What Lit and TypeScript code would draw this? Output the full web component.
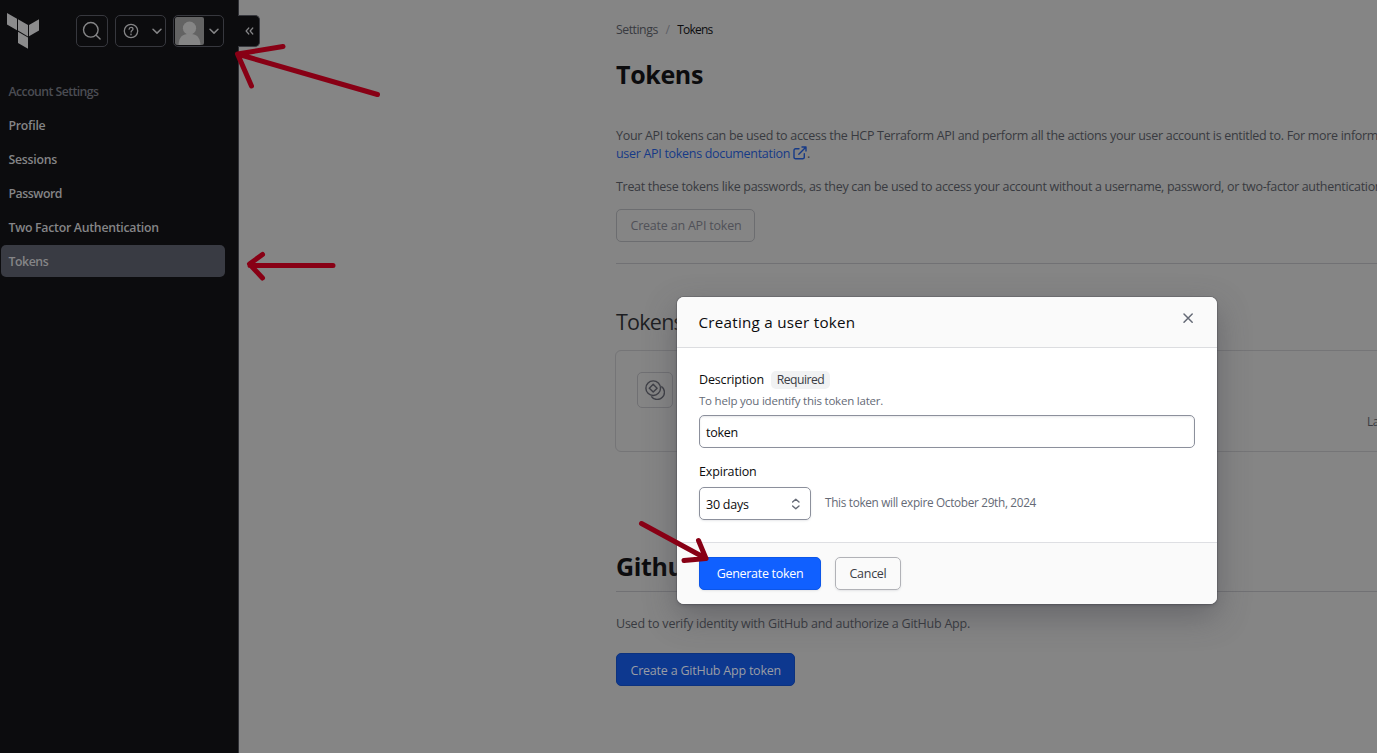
import { LitElement, html, css, svg } from "lit";
import { customElement } from "lit/decorators.js";
import { classMap } from "lit/directives/class-map.js";

const chevron = html`<svg width="12" height="12" viewBox="0 0 12 12" fill="none" stroke="currentColor" stroke-width="1.5" stroke-linecap="round" stroke-linejoin="round"><path d="M2 4.2l4 3.9 4-3.9" /></svg>`;

const sharedStyles = css`
  :host {
    display: block;
    box-sizing: border-box;
    font-family: "Open Sans", "Noto Sans", sans-serif;
    font-size: 12.5px;
    white-space: nowrap;
  }
  *,
  *::before,
  *::after {
    box-sizing: border-box;
  }
  svg {
    display: block;
    flex: none;
  }
  h1,
  h2,
  p {
    margin: 0;
  }
`;

@customElement("app-sidebar")
class AppSidebar extends LitElement {
  static styles = [
    sharedStyles,
    css`
      :host {
        position: relative;
        width: 239px;
        height: 753px;
        flex: none;
        background: #0c0c0e;
        border-right: 1px solid #303136;
        color: #858587;
      }
      .top {
        display: flex;
        height: 75px;
        padding: 15px 0 0 7px;
        gap: 7px;
      }
      .logo {
        margin: -2px 30px 0 0;
      }
      .btn {
        display: flex;
        align-items: center;
        height: 32px;
        width: 51px;
        padding: 0 3px 0 7px;
        gap: 12px;
        border: 1px solid #37383e;
        border-radius: 5px;
      }
      .search {
        width: 32px;
        padding: 0 0 0 5px;
      }
      .user {
        padding: 0 3px 0 1px;
        gap: 4px;
      }
      .nav {
        display: flex;
        flex-direction: column;
        gap: 2px;
        width: 225px;
        padding-left: 1px;
      }
      .item {
        height: 32px;
        line-height: 34px;
        padding-left: 7.5px;
        border-radius: 5px;
        font-size: 12.3px;
        font-weight: 600;
        letter-spacing: -0.27px;
      }
      .heading {
        color: #4b4c53;
        line-height: 33px;
        letter-spacing: -0.57px;
      }
      .tight {
        letter-spacing: -0.45px;
      }
      .active {
        background: #393b43;
        letter-spacing: -0.45px;
      }
      .collapse {
        position: absolute;
        left: 238px;
        top: 15px;
        width: 22px;
        height: 32px;
        display: flex;
        align-items: center;
        padding-left: 7px;
        background: #0c0c0e;
        border: 1px solid #37383e;
        border-left: 0;
        border-radius: 0 5px 5px 0;
      }
    `,
  ];
  items = ["Profile", "Sessions", "Password", "Two Factor Authentication", "Tokens"];
  render() {
    return html`
      <div class="top">
        <svg class="logo" width="32" height="36" viewBox="0 0 32 36" fill="#8b8b8c">
          <path d="M0 0l10 5.8v11.4L0 11.4zM11 6.2l10 5.8v11.4l-10-5.8zM22 12l10-5.8v11.3l-10 5.8zM11 18.7l10 5.8v11.3l-10-5.8z" />
        </svg>
        <div class="btn search">
          <svg width="20" height="20" viewBox="0 0 20 20" fill="none" stroke="currentColor" stroke-width="1.4" stroke-linecap="round"><circle cx="8.800" cy="8.800" r="7.300" /><path d="M14.200 14.200l3.900 3.900" /></svg>
        </div>
        <div class="btn">
          <svg width="16" height="16" viewBox="0 0 16 16" fill="none" stroke="currentColor" stroke-width="1.3" stroke-linecap="round"><circle cx="8" cy="8" r="6.7" /><path d="M6.1 6.2c.1-1.3 1-1.9 2-1.9s1.9.7 1.9 1.8c0 1.4-1.9 1.6-1.9 3" /><circle cx="8" cy="11.4" r=".3" /></svg>
          ${chevron}
        </div>
        <div class="btn user">
          <svg width="29" height="28" viewBox="0 0 29 28"><rect width="29" height="28" rx="2" fill="#636363" /><circle cx="14.5" cy="11.2" r="6.6" fill="#858585" /><path d="M3.5 28c.4-8 4-11.2 11-11.2S25 20 25.500 28z" fill="#858585" /></svg>
          ${chevron}
        </div>
      </div>
      <div class="nav">
        <div class="item heading">Account Settings</div>
        ${this.items.map(
          (t) => html`<div class=${classMap({ item: true, tight: t === "Password", active: t === "Tokens" })}>${t}</div>`
        )}
      </div>
      <div class="collapse">
        <svg width="9" height="10" viewBox="0 0 9 10" fill="none" stroke="currentColor" stroke-width="1.2" stroke-linecap="round" stroke-linejoin="round"><path d="M3.800 2L1.100 5l2.700 3M7.800 2L5.100 5l2.700 3" /></svg>
      </div>
    `;
  }
}

@customElement("tokens-page")
class TokensPage extends LitElement {
  static styles = [
    sharedStyles,
    css`
      :host {
        flex: 1;
        min-width: 0;
        height: 753px;
        padding: 20px 0 0 377px;
        overflow: hidden;
        color: #383a40;
        letter-spacing: -0.303px;
      }
      .crumbs {
        display: flex;
        height: 20px;
        line-height: 20px;
        font-size: 12.3px;
        letter-spacing: -0.48px;
      }
      .slash {
        width: 19.500px;
        text-align: center;
        color: #5e5f65;
      }
      .here {
        color: #0c0c0e;
        font-size: 12px;
        letter-spacing: -0.8px;
      }
      h1 {
        color: #0c0c0e;
        font-size: 25px;
        font-weight: 700;
        letter-spacing: -0.35px;
        height: 36px;
        line-height: 36px;
      }
      .title {
        margin-top: 16px;
      }
      p {
        line-height: 18px;
      }
      .intro {
        margin: 35px 0 15px;
      }
      .link {
        color: #163a87;
      }
      .ext {
        display: inline-block;
        vertical-align: -2px;
        margin-left: 3px;
      }
      .btn {
        width: 139px;
        height: 33px;
        line-height: 32px;
        margin-top: 13px;
        padding-left: 13.500px;
        border: 1px solid #6c6d70;
        border-radius: 5px;
        color: #505158;
        letter-spacing: -0.21px;
      }
      .primary {
        width: 179px;
        margin-top: 20px;
        line-height: 33px;
        background: #0d388f;
        border-color: #0c327f;
        color: #9a9da5;
        letter-spacing: -0.22px;
      }
      .rule {
        height: 1px;
        background: #717174;
      }
      .first {
        margin-top: 21px;
      }
      h2 {
        margin-top: 42px;
        height: 32px;
        line-height: 32px;
        font-size: 21.5px;
        font-weight: 400;
        letter-spacing: -0.75px;
        color: #1d1e22;
      }
      .card {
        display: flex;
        justify-content: space-between;
        width: 900px;
        height: 102px;
        margin: 12px 0 0 -1px;
        padding: 21px;
        border: 1px solid #757577;
        border-radius: 6px;
      }
      .tile {
        display: grid;
        place-items: center;
        width: 36px;
        height: 36px;
        border: 1px solid #707073;
        border-radius: 5px;
      }
      .used {
        width: 126px;
        padding-top: 41px;
        font-size: 11.8px;
      }
      .github {
        margin-top: 96px;
      }
      .under {
        margin-top: 7px;
      }
      .verify {
        margin-top: 23px;
        letter-spacing: -0.23px;
      }
    `,
  ];
  render() {
    return html`
      <div class="crumbs"><span>Settings</span><span class="slash">/</span><span class="here">Tokens</span></div>
      <h1 class="title">Tokens</h1>
      <p class="intro">
        Your API tokens can be used to access the HCP Terraform API and perform all the actions your user account is entitled to. For more information,<br /><span class="link">user API tokens documentation<svg class="ext" width="14" height="14" viewBox="0 0 14 14" fill="none" stroke="currentColor" stroke-width="1.4" stroke-linecap="round" stroke-linejoin="round"><path d="M9 1h4v4M13 1L5.800 8.200M11.300 7.800v3.400a1.600 1.600 0 0 1-1.600 1.600H2.600A1.600 1.600 0 0 1 1 11.200V4.400a1.600 1.600 0 0 1 1.600-1.600H6" /></svg></span>.
      </p>
      <p>Treat these tokens like passwords, as they can be used to access your account without a username, password, or two-factor authentication.</p>
      <div class="btn">Create an API token</div>
      <div class="rule first"></div>
      <h2>Tokens</h2>
      <div class="card">
        <div class="tile">
          <svg width="20" height="20" viewBox="0 0 20 20" fill="none" stroke="#3f4047" stroke-width="1.4" stroke-linejoin="round"><circle cx="8.200" cy="8.200" r="7.300" /><path d="M8.200 4.300l3.900 3.900-3.900 3.900-3.900-3.900zM16.300 6.300a7.200 7.200 0 1 1-10 10" /></svg>
        </div>
        <div class="used">Last used</div>
      </div>
      <h1 class="github">Github</h1>
      <div class="rule under"></div>
      <p class="verify">Used to verify identity with GitHub and authorize a GitHub App.</p>
      <div class="btn primary">Create a GitHub App token</div>
    `;
  }
}

@customElement("token-dialog")
class TokenDialog extends LitElement {
  static styles = [
    sharedStyles,
    css`
      :host {
        position: absolute;
        left: 677px;
        top: 297px;
        width: 540px;
        height: 307px;
        border-radius: 7px;
        overflow: hidden;
        background: #fff;
        color: #0c0c0e;
        box-shadow: 0 0 0 1px rgba(59, 61, 69, 0.25), 0 2px 3px rgba(59, 61, 69, 0.25), 0 12px 32px rgba(59, 59, 69, 0.42);
      }
      .head {
        display: flex;
        justify-content: space-between;
        height: 51px;
        padding: 0 23px 0 21.500px;
        line-height: 50px;
        background: #fafafa;
        border-bottom: 1px solid #dcdde0;
        font-size: 15.2px;
        font-weight: 500;
        letter-spacing: 0.26px;
      }
      .close {
        margin-top: 15px;
      }
      .body {
        height: 194px;
        padding: 22px;
      }
      .label {
        display: flex;
        align-items: center;
        height: 19px;
        gap: 7px;
        font-weight: 500;
        letter-spacing: -0.16px;
      }
      .badge {
        width: 59px;
        height: 18px;
        line-height: 18px;
        text-align: center;
        border-radius: 5px;
        background: #f1f2f3;
        color: #3b3d45;
        font-size: 12.2px;
        letter-spacing: -0.5px;
      }
      .help {
        height: 26px;
        color: #656a76;
        font-size: 11.5px;
        letter-spacing: -0.21px;
        line-height: 24px;
      }
      .field {
        display: flex;
        align-items: center;
        justify-content: space-between;
        height: 33px;
        padding: 2px 9px 0 6px;
        border: 1px solid #8c909c;
        border-radius: 5px;
        letter-spacing: -0.25px;
        box-shadow: inset 0 1px 2px rgba(101, 106, 118, 0.15);
      }
      .second {
        margin-top: 14px;
        margin-bottom: 6px;
      }
      .row {
        display: flex;
        gap: 14px;
      }
      .select {
        width: 112px;
        box-shadow: 0 1px 2px rgba(101, 106, 118, 0.15);
      }
      .note {
        line-height: 31px;
        color: #656a76;
        font-size: 11.8px;
        letter-spacing: -0.325px;
      }
      .foot {
        display: flex;
        gap: 14px;
        height: 62px;
        padding: 14px 22px;
        background: #fafafa;
        border-top: 1px solid #dedfe3;
      }
      .btn {
        width: 66px;
        height: 33px;
        line-height: 32px;
        text-align: center;
        border: 1px solid #b1b2b7;
        border-radius: 5px;
        color: #3b3d45;
        letter-spacing: -0.28px;
        box-shadow: 0 1px 2px rgba(101, 106, 118, 0.15);
      }
      .go {
        width: 122px;
        background: #1060ff;
        border-color: #0c56e9;
        color: #fff;
        font-weight: 500;
        letter-spacing: -0.3px;
      }
    `,
  ];
  render() {
    return html`
      <div class="head">
        <span>Creating a user token</span>
        <svg class="close" width="12" height="12" viewBox="0 0 12 12" fill="none" stroke="#656a76" stroke-width="1.5" stroke-linecap="round"><path d="M2 2l8.200 8.200M10.200 2L2 10.200" /></svg>
      </div>
      <div class="body">
        <div class="label"><span>Description</span><span class="badge">Required</span></div>
        <div class="help">To help you identify this token later.</div>
        <div class="field">token</div>
        <div class="label second">Expiration</div>
        <div class="row">
          <div class="field select">
            <span>30 days</span>
            <svg width="11" height="14" viewBox="0 0 11 14" fill="none" stroke="#656a76" stroke-width="1.4" stroke-linecap="round" stroke-linejoin="round"><path d="M2.600 4.100L5.800 1.200l3.200 2.900M2.600 7.900l3.200 2.900L9 7.900" /></svg>
          </div>
          <div class="note">This token will expire October 29th, 2024</div>
        </div>
      </div>
      <div class="foot">
        <div class="btn go">Generate token</div>
        <div class="btn">Cancel</div>
      </div>
    `;
  }
}

@customElement("app-root")
class AppRoot extends LitElement {
  static styles = css`
    :host {
      display: flex;
      position: relative;
      width: 1377px;
      height: 753px;
      overflow: hidden;
      background: #858585;
    }
    .arrows {
      position: absolute;
      inset: 0;
      pointer-events: none;
    }
  `;
  arrows = [
    "M377.500 94.500L237.500 54L283 46.500M237.500 54L251.500 86",
    "M333 265.500H250M262.500 254.500L249.500 264L262.500 278",
    "M641.500 523.500L706 558.500L684 560.500M706 558.500L698.500 540.500",
  ];
  render() {
    return html`
      <app-sidebar></app-sidebar>
      <tokens-page></tokens-page>
      <token-dialog></token-dialog>
      <svg class="arrows" width="1377" height="753" viewBox="0 0 1377 753" fill="none" stroke="#880015" stroke-width="5" stroke-linecap="round" stroke-linejoin="round">
        ${this.arrows.map((d) => svg`<path d=${d} />`)}
      </svg>
    `;
  }
}
